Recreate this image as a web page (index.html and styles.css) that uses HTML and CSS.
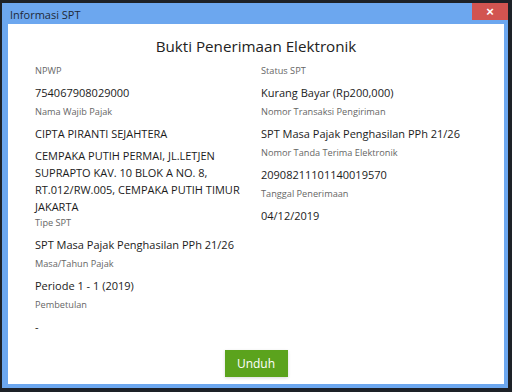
FILE: index.html
```html
<!DOCTYPE html>
<html lang="en">
<head>
    <meta charset="UTF-8">
    <meta name="viewport" content="width=device-width, initial-scale=1.0">
    <title>Informasi SPT</title>
    <link rel="stylesheet" href="styles.css">
</head>
<body>
    <div class="window">
        <div class="titlebar">
            <span class="title">Informasi SPT</span>
            <button class="close">&#215;</button>
        </div>
        <div class="content">
            <h1 class="heading">Bukti Penerimaan Elektronik</h1>
            <div class="columns">
                <div class="col">
                    <div class="label">NPWP</div>
                    <div class="value">754067908029000</div>
                    <div class="label">Nama Wajib Pajak</div>
                    <div class="value">CIPTA PIRANTI SEJAHTERA</div>
                    <div class="value address">CEMPAKA PUTIH PERMAI, JL.LETJEN SUPRAPTO KAV. 10 BLOK A NO. 8, RT.012/RW.005, CEMPAKA PUTIH TIMUR JAKARTA</div>
                    <div class="label">Tipe SPT</div>
                    <div class="value">SPT Masa Pajak Penghasilan PPh 21/26</div>
                    <div class="label">Masa/Tahun Pajak</div>
                    <div class="value">Periode 1 - 1 (2019)</div>
                    <div class="label">Pembetulan</div>
                    <div class="value">-</div>
                </div>
                <div class="col">
                    <div class="label">Status SPT</div>
                    <div class="value">Kurang Bayar (Rp200,000)</div>
                    <div class="label">Nomor Transaksi Pengiriman</div>
                    <div class="value">SPT Masa Pajak Penghasilan PPh 21/26</div>
                    <div class="label">Nomor Tanda Terima Elektronik</div>
                    <div class="value">20908211101140019570</div>
                    <div class="label">Tanggal Penerimaan</div>
                    <div class="value">04/12/2019</div>
                </div>
            </div>
            <div class="actions">
                <button class="btn-unduh">Unduh</button>
            </div>
        </div>
    </div>
</body>
</html>
```
FILE: styles.css
```css
body, html {
    margin: 0;
    padding: 0;
    width: 100%;
    height: 100%;
    overflow: hidden;
}
body {
    background-color: #1d2127;
    font-family: "Open Sans", Arial, sans-serif;
    padding: 3px 4px 4px 2px;
    box-sizing: border-box;
}
.window {
    display: flex;
    flex-direction: column;
    height: 100%;
    background-color: #6ca7ef;
    padding: 0 4px 4px 6px;
    box-sizing: border-box;
}
.titlebar {
    display: flex;
    align-items: flex-start;
    justify-content: space-between;
    height: 21px;
    flex-shrink: 0;
}
.title {
    font-size: 11px;
    color: #1f2a38;
    margin-top: 4px;
    margin-left: 2px;
}
.close {
    width: 36px;
    height: 17px;
    margin-right: -4px;
    border: none;
    background-color: #d25450;
    color: white;
    font-size: 13px;
    font-weight: bold;
    line-height: 17px;
    padding: 0;
}
.content {
    flex: 1;
    background-color: white;
    padding: 0 27px;
    display: flex;
    flex-direction: column;
}
.heading {
    margin: 12px 0 5px;
    font-size: 15.2px;
    line-height: 21px;
    font-weight: normal;
    text-align: center;
    color: #222;
}
.columns {
    display: grid;
    grid-template-columns: 214px 1fr;
    column-gap: 12px;
}
.label {
    font-size: 9.2px;
    color: #666;
    line-height: 18px;
}
.value {
    font-size: 11px;
    color: #1b1b1b;
    line-height: 17px;
    padding: 4px 0 2px;
}
.address {
    padding-top: 3px;
    margin-bottom: -3px;
}
.actions {
    margin-top: auto;
    padding-bottom: 7px;
    display: flex;
    justify-content: center;
}
.btn-unduh {
    width: 63px;
    height: 27px;
    border: none;
    background-color: #5ba31d;
    color: white;
    font-family: "Open Sans", Arial, sans-serif;
    font-size: 12px;
    box-shadow: 0 1px 3px rgba(0, 0, 0, 0.15);
}
```
